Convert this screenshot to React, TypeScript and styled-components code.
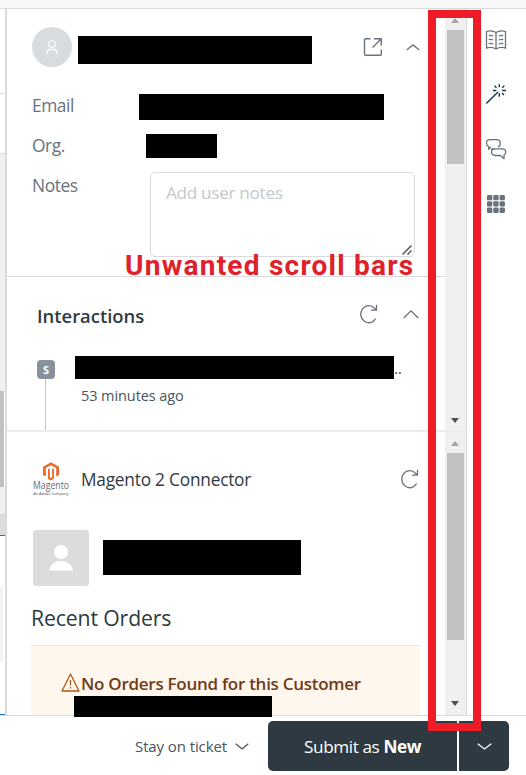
import React from 'react';
import styled, { createGlobalStyle } from 'styled-components';

const Global = createGlobalStyle`
  * { box-sizing: border-box; }
  body { margin: 0; background: #fff; font-family: "Open Sans", "Noto Sans", sans-serif; color: #2f3941; overflow: hidden; }
  svg { display: block; flex: none; }
`;

const Page = styled.div`
  position: relative;
  width: 526px;
  height: 775px;
  display: flex;
  flex-direction: column;
  overflow: hidden;
`;
const TopStrip = styled.div`
  flex: none;
  height: 9px;
  background: #f8f8f8;
  border-bottom: 1px solid #d8dadc;
`;
const Body = styled.div`
  height: 706px;
  display: flex;
`;
const Edge = styled.div`
  width: 5px;
  display: flex;
  flex-direction: column;
`;
const EdgePart = styled.div<{ $h: number; $bg?: string; $w?: number }>`
  flex: none;
  width: ${p => p.$w ?? 5}px;
  height: ${p => p.$h}px;
  background: ${p => p.$bg ?? '#fff'};
`;
const Divider = styled.div`
  width: 2px;
  background: #d9dadb;
`;
const Column = styled.div`
  width: 459px;
  display: flex;
  flex-direction: column;
`;
const Pane = styled.section<{ $h: number }>`
  height: ${p => p.$h}px;
  display: flex;
  overflow: hidden;
`;
const PaneContent = styled.div`
  width: 438px;
  flex: none;
`;
const PaneGap = styled.div`
  height: 2px;
  background: #ebebec;
`;
const Track = styled.div`
  width: 21px;
  background: #f0f0f0;
  display: flex;
  flex-direction: column;
  padding-left: 2px;
`;
const Arrow = styled.div<{ $down?: boolean; $end?: number }>`
  width: 0;
  height: 0;
  margin: ${p => (p.$down ? `auto 0 ${p.$end}px 4px` : '9px 0 7px 4px')};
  border-left: 4.5px solid transparent;
  border-right: 4.5px solid transparent;
  ${p => (p.$down ? 'border-top: 5px solid #505050;' : 'border-bottom: 5px solid #a3a3a3;')}
`;
const Thumb = styled.div<{ $h: number }>`
  width: 17px;
  height: ${p => p.$h}px;
  background: #c1c1c1;
`;
const Rail = styled.nav`
  width: 60px;
  border-left: 1px solid #d8dadc;
  padding: 21px 0 0 18px;
  display: flex;
  flex-direction: column;
  gap: 34px;
  color: #68737d;
`;
const Redacted = styled.div<{ $w: number; $h: number; $ml?: number; $mt?: number }>`
  flex: none;
  width: ${p => p.$w}px;
  height: ${p => p.$h}px;
  margin-left: ${p => p.$ml ?? 0}px;
  margin-top: ${p => p.$mt ?? 0}px;
  background: #000;
`;
const Profile = styled.div`
  height: 268px;
  border-bottom: 1px solid #d8dadc;
`;
const ProfileHeader = styled.header`
  height: 76px;
  margin-bottom: 1px;
  display: flex;
  align-items: center;
  padding-left: 25px;
  color: #68737d;
`;
const Avatar = styled.div`
  width: 40px;
  height: 40px;
  border-radius: 50%;
  background: #d8dcde;
  display: grid;
  place-items: center;
  color: #fff;
`;
const OpenIcon = styled.svg`
  margin-left: 51px;
`;
const Field = styled.div`
  height: 40px;
  display: flex;
  align-items: flex-start;
  padding-left: 25px;
`;
const Label = styled.span`
  width: 106px;
  line-height: 39px;
  font-size: 17.4px;
  letter-spacing: -0.45px;
  color: #68737d;
`;
const Notes = styled.div`
  width: 265px;
  height: 85px;
  margin: 6px 0 0 12px;
  border: 1px solid #d8dcde;
  border-radius: 5px;
  padding: 0 2px 1px 15px;
  line-height: 40px;
  font-size: 17.2px;
  letter-spacing: -0.32px;
  color: #c2c8cc;
  display: flex;
  justify-content: space-between;
`;
const Grip = styled.svg`
  align-self: flex-end;
`;
const SectionHeader = styled.header`
  height: 74px;
  margin-bottom: 2px;
  display: flex;
  align-items: center;
  padding-left: 30px;
  color: #68737d;
`;
const SectionTitle = styled.h2`
  width: 323px;
  margin: 3px 0 0;
  font-size: 18.4px;
  font-weight: 600;
  letter-spacing: 0;
  color: #2f3941;
`;
const Interaction = styled.div`
  display: flex;
  padding: 3px 0 0 30px;
  height: 78px;
`;
const Timeline = styled.div`
  width: 18px;
  display: flex;
  flex-direction: column;
  align-items: center;
  padding-top: 4px;
`;
const Status = styled.div`
  flex: none;
  width: 18px;
  height: 19px;
  border-radius: 4px;
  background: #87929d;
  color: #fff;
  font-size: 11px;
  font-weight: 700;
  line-height: 19px;
  text-align: center;
`;
const Stem = styled.div`
  width: 1px;
  flex: 1;
  margin-right: 1px;
  background: #c2c4c6;
`;
const Details = styled.div`
  margin-left: 20px;
`;
const Subject = styled.div`
  display: flex;
  height: 23px;
  font-size: 16px;
  line-height: 25px;
  letter-spacing: -0.5px;
  color: #49545c;
`;
const Ago = styled.div`
  padding-left: 6px;
  font-size: 14.5px;
  line-height: 33px;
  letter-spacing: -0.08px;
  color: #49545c;
`;
const AppHeader = styled.header`
  height: 94px;
  padding-left: 26px;
  display: flex;
  align-items: center;
  color: #68737d;
`;
const AppName = styled.div`
  width: 320px;
  margin-left: 8px;
  padding-top: 1px;
  font-size: 17.3px;
  letter-spacing: -0.22px;
  color: #2f3941;
`;
const Customer = styled.div`
  height: 64px;
  padding-left: 26px;
  display: flex;
  align-items: center;
`;
const Picture = styled.div`
  width: 56px;
  height: 56px;
  border-radius: 3px;
  background: #dcdcdc;
  display: grid;
  place-items: center;
`;
const OrdersTitle = styled.h3`
  margin: 0;
  height: 55px;
  padding-left: 24px;
  line-height: 56px;
  font-size: 21.2px;
  font-weight: 400;
  letter-spacing: -0.12px;
  color: #2f3941;
`;
const Warning = styled.div`
  width: 389px;
  height: 90px;
  margin-left: 24px;
  padding: 18px 0 0 30px;
  border-top: 1px solid #e3e6e6;
  background: #fff7ed;
  display: flex;
  align-items: flex-start;
  gap: 1px;
  font-size: 17px;
  font-weight: 600;
  line-height: 39px;
  letter-spacing: -0.27px;
  color: #703b15;
  svg { margin-top: 9px; }
`;
const Footer = styled.footer`
  height: 60px;
  border-top: 1px solid #d8dadc;
  padding: 5px 17px 0 135px;
  display: flex;
`;
const Stay = styled.div`
  width: 133px;
  height: 50px;
  display: flex;
  align-items: center;
  gap: 8px;
  font-size: 15px;
  letter-spacing: -0.1px;
  white-space: nowrap;
  color: #49545c;
`;
const Button = styled.button<{ $w: number; $side: 'left' | 'right' }>`
  width: ${p => p.$w}px;
  height: 50px;
  padding: ${p => (p.$side === 'left' ? '2px 0 0' : '0 0 0 1px')};
  margin-left: ${p => (p.$side === 'left' ? 0 : 2)}px;
  border: 0;
  border-radius: ${p => (p.$side === 'left' ? '5px 0 0 5px' : '0 5px 5px 0')};
  background: #2f3941;
  color: #fff;
  font: 400 17.2px/48px "Open Sans", sans-serif;
  letter-spacing: -0.42px;
  display: flex;
  justify-content: center;
  align-items: center;
  white-space: pre;
`;
const CoverBar = styled.div`
  position: absolute;
  left: 74px;
  top: 696px;
  width: 198px;
  height: 21px;
  background: #000;
`;
const Callout = styled.div`
  position: absolute;
  left: 428px;
  top: 10px;
  width: 53px;
  height: 721px;
  border: 8px solid #ed1c26;
`;
const CalloutText = styled.div`
  position: absolute;
  left: 125px;
  top: 246px;
  font: 700 28px/40px Roboto, sans-serif;
  letter-spacing: 1.25px;
  white-space: nowrap;
  color: #e0202b;
`;
const ChevronSvg = styled.svg<{ $ml: number }>`
  margin-left: ${p => p.$ml}px;
`;

const Chevron = ({ w = 15, down = false, ml = 0, h = 7 }: { w?: number; down?: boolean; ml?: number; h?: number }) => (
  <ChevronSvg $ml={ml} width={w} height={h + 1} viewBox={`0 0 ${w} ${h + 1}`} fill="none" stroke="currentColor" strokeWidth="1.3">
    <path d={down ? `M.7 .7L${w / 2} ${h}L${w - 0.7} .7` : `M.7 ${h}L${w / 2} .9L${w - 0.7} ${h}`} />
  </ChevronSvg>
);
const Reload = () => (
  <svg width="18" height="20" viewBox="0 0 18 20" fill="none" stroke="currentColor" strokeWidth="1.3">
    <path d="M15.6 14.600A8 8.500 0 1 1 14.500 4.300L16.300 6M16.500 .7V6.200H11" />
  </svg>
);
const Bar = ({ thumb, end }: { thumb: number; end: number }) => (
  <Track>
    <Arrow />
    <Thumb $h={thumb} />
    <Arrow $down $end={end} />
  </Track>
);

const edge: [number, string, number?][] = [
  [84, '#fff'], [1, '#d8dadc'], [59, '#fff'], [1, '#d8dadc'], [237, '#f0f0f0'],
  [96, '#c1c1c1', 4], [27, '#f0f0f0'], [21, '#dcdcdc'], [1, '#1f73b7'], [51, '#fff'],
  [75, '#f3f3f3', 3], [52, '#fff'], [1, '#1f73b7'],
];

export default function App() {
  return (
    <Page>
      <Global />
      <TopStrip />
      <Body>
        <Edge>{edge.map(([h, bg, w], i) => <EdgePart key={i} $h={h} $bg={bg} $w={w} />)}</Edge>
        <Divider />
        <Column>
          <Pane $h={421}>
            <PaneContent>
              <Profile>
                <ProfileHeader>
                  <Avatar>
                    <svg width="12" height="15" viewBox="0 0 12 15" fill="none" stroke="currentColor" strokeWidth="1.1">
                      <circle cx="6" cy="4" r="3.3" />
                      <path d="M.7 14.5V13a4 4 0 0 1 4-3.6h2.6a4 4 0 0 1 4 3.6v1.5" />
                    </svg>
                  </Avatar>
                  <Redacted $w={234} $h={28} $ml={6} $mt={6} />
                  <OpenIcon width="19" height="18" viewBox="0 0 19 18" fill="none" stroke="currentColor" strokeWidth="1.4">
                    <path d="M7.500 .7H2.500a1 1 0 0 0-1 1v14.600a1 1 0 0 0 1 1h14.800a1 1 0 0 0 1-1V11.500M11 .8h7.200V7.500M18 1L9.500 9.500" />
                  </OpenIcon>
                  <Chevron w={14} h={6} ml={24} />
                </ProfileHeader>
                <Field><Label>Email</Label><Redacted $w={245} $h={26} $ml={1} $mt={8} /></Field>
                <Field><Label>Org.</Label><Redacted $w={71} $h={24} $ml={8} $mt={8} /></Field>
                <Field>
                  <Label>Notes</Label>
                  <Notes>
                    Add user notes
                    <Grip width="10" height="10" viewBox="0 0 10 10" stroke="#555" strokeWidth="1.5">
                      <path d="M.5 9.5L9.5 .5M5.5 9.5L9.5 5.5" />
                    </Grip>
                  </Notes>
                </Field>
              </Profile>
              <SectionHeader>
                <SectionTitle>Interactions</SectionTitle>
                <Reload />
                <Chevron w={16} h={8} ml={25} />
              </SectionHeader>
              <Interaction>
                <Timeline><Status>S</Status><Stem /></Timeline>
                <Details>
                  <Subject><Redacted $w={319} $h={23} />..</Subject>
                  <Ago>53 minutes ago</Ago>
                </Details>
              </Interaction>
            </PaneContent>
            <Bar thumb={134} end={7} />
          </Pane>
          <PaneGap />
          <Pane $h={283}>
            <PaneContent>
              <AppHeader>
                <svg width="40" height="36" viewBox="0 -1 40 36">
                  <path d="M10 13V4.7L18 .2l8 4.5V13l-2.8 1.6V6.1L18 3.2l-5.2 2.9v8.5zM15 7.200l1.800-.9v9l1.200.6 1.200-.6v-9l1.800.9v9L18 18.500l-3-1.500z" fill="#e76a2b" />
                  <text x="0" y="27" fontFamily="Open Sans" fontWeight="400" fontSize="10" textLength="36" lengthAdjust="spacingAndGlyphs" fill="#6a6a6a">Magento</text>
                  <text x="0.3" y="32.500" fontFamily="Open Sans" fontSize="4" textLength="35" lengthAdjust="spacingAndGlyphs" fill="#444">An Adobe Company</text>
                </svg>
                <AppName>Magento 2 Connector</AppName>
                <Reload />
              </AppHeader>
              <Customer>
                <Picture>
                  <svg width="24" height="26" viewBox="0 0 24 26" fill="#fff"><circle cx="12" cy="7" r="7" /><path d="M0 25.5C1.5 19 6 16 12 16s10.500 3 12 9.500z" /></svg>
                </Picture>
                <Redacted $w={198} $h={35} $ml={14} $mt={-1} />
              </Customer>
              <OrdersTitle>Recent Orders</OrdersTitle>
              <Warning>
                <svg width="19" height="19" viewBox="0 0 19 19" fill="none" stroke="#ad5918" strokeWidth="1.3" strokeLinejoin="round">
                  <path d="M9.500 1L18 18H1zM9.500 7v5.500M9.500 14v1.600" />
                </svg>
                No Orders Found for this Customer
              </Warning>
            </PaneContent>
            <Bar thumb={187} end={9} />
          </Pane>
        </Column>
        <Rail>
          <svg width="22" height="20" viewBox="0 0 22 20" fill="none" stroke="currentColor" strokeWidth="1.3">
            <path d="M11 2.500C8 .6 4.500 .6 1.500 1.500V18c3-.8 6.500-.8 9.500 1 3-1.800 6.500-1.800 9.500-1V1.500C17.500 .6 14 .6 11 2.500zM11 2.500V19M3.800 5.500c1.500-.3 3-.1 4.500.5M3.800 9.500c1.500-.3 3-.1 4.500.5M3.800 13.500c1.500-.3 3-.1 4.500.5M18.200 5.500c-1.500-.3-3-.1-4.500.5M18.200 9.500c-1.500-.3-3-.1-4.500.5M18.200 13.500c-1.500-.3-3-.1-4.500.5" />
          </svg>
          <svg width="22" height="21" viewBox="0 0 22 21" fill="none" stroke="#17344d" strokeWidth="1.4">
            <path d="M1.300 19.500L13 8M14.300 .2v3M14.300 9.300v3.500M7.800 6.500h3.500M17.200 6.500H21M9.500 1.700l2 2M19.300 1.700l-2 2M17 9l2 2" />
          </svg>
          <svg width="22" height="21" viewBox="0 0 22 21" fill="none" stroke="currentColor" strokeWidth="1.3" strokeLinejoin="round">
            <path d="M6 9.800h11c2.500 0 3.800 1.100 3.800 3.300 0 1.500-.6 2.500-1.800 3.100v3.500L15.500 16.500H10.500C8 16.500 6.500 15.300 6.500 13.100S8 9.800 10.500 9.800M5.600 8L3.700 10.400V7.400C2.200 6.900 1.500 5.700 1.500 4.200 1.500 1.800 2.800 .7 5 .7h6.500c2.600 0 3.800 1.100 3.800 3.500S14.500 7.500 13 7.900" />
          </svg>
          <svg width="20" height="20" viewBox="0 -1 20 20" fill="currentColor">
            {[0, 6.300, 12.600].map(y => [2, 8.300, 14.600].map(x => <rect key={`${x}-${y}`} x={x} y={y} width="5.300" height="5.300" rx="1" />))}
          </svg>
        </Rail>
      </Body>
      <Footer>
        <Stay>Stay on ticket <Chevron w={14} h={6} down /></Stay>
        <Button $w={189} $side="left">Submit as <b>New</b></Button>
        <Button $w={50} $side="right"><Chevron w={15} h={6} down /></Button>
      </Footer>
      <CoverBar />
      <CalloutText>Unwanted scroll bars</CalloutText>
      <Callout />
    </Page>
  );
}
